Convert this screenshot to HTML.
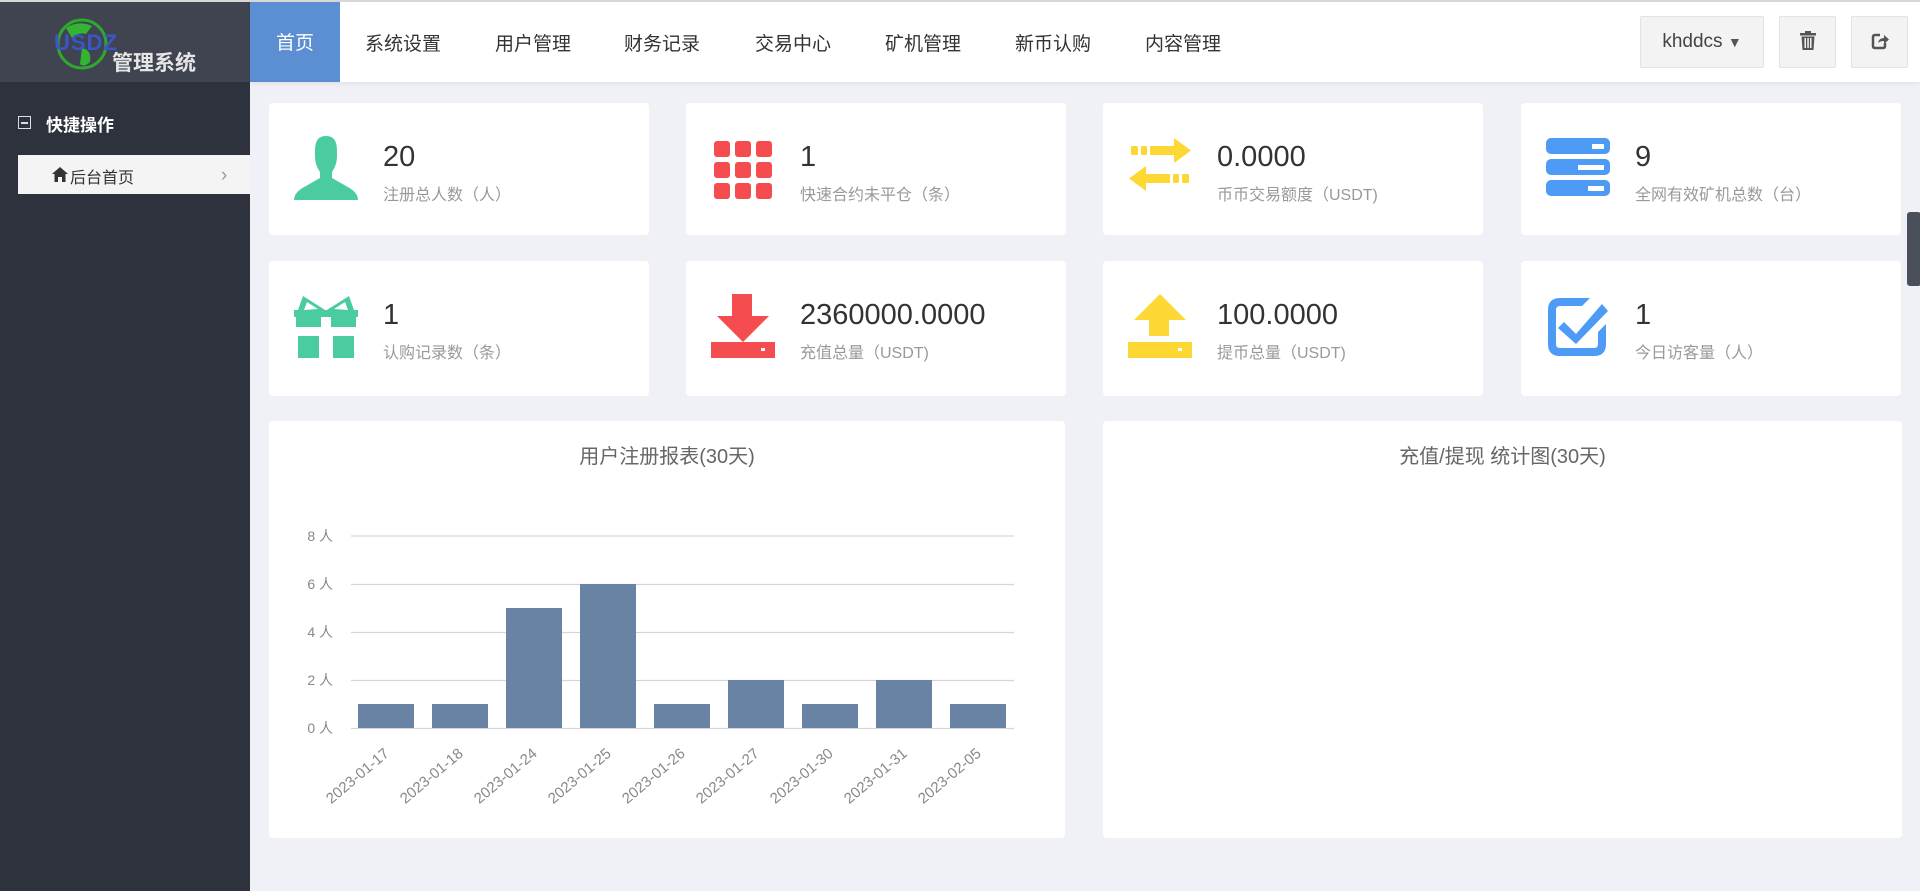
<!DOCTYPE html>
<html><head><meta charset="utf-8"><style>
*{margin:0;padding:0;box-sizing:border-box}
body{width:1920px;height:891px;overflow:hidden;background:#f0f1f6;font-family:"Liberation Sans","Noto Sans CJK SC",sans-serif;position:relative}
.topline{position:absolute;left:0;top:0;width:1920px;height:2px;background:#d8d8d8}
.logo{position:absolute;left:0;top:2px;width:250px;height:80px;background:#3f4450}
.side{position:absolute;left:0;top:82px;width:250px;height:809px;background:#2d323d}
.header{position:absolute;left:250px;top:2px;width:1670px;height:80px;background:#fff;box-shadow:0 2px 4px rgba(0,0,0,.06)}
.nav{position:absolute;top:3px;height:80px;line-height:80px;font-size:19px;color:#333}
.nav.act{background:#5b8fd1;color:#fff;width:90px;text-align:center;left:0;top:0;line-height:84px}
.btn{position:absolute;top:14px;height:52px;background:#f3f3f3;border:1px solid #e3e3e3;border-radius:2px;font-size:19px;color:#444;text-align:center;line-height:50px}
.card{position:absolute;background:#fff;border-radius:4px;width:380px}
.card .ic{position:absolute;left:25px;top:33px;width:64px;height:64px}
.card .num{position:absolute;left:114px;top:38px;font-size:29px;color:#333}
.card .lab{position:absolute;left:114px;top:78px;font-size:16px;color:#999}
.chart{position:absolute;background:#fff;border-radius:4px;top:421px;height:417px}
.chart .t{position:absolute;top:19px;width:100%;text-align:center;font-size:20px;color:#666}
</style></head><body>
<div class="topline"></div>
<div class="logo">
<svg style="position:absolute;left:52px;top:16px" width="62" height="56" viewBox="0 0 62 56"><circle cx="30" cy="26" r="24" fill="none" stroke="#2ea82e" stroke-width="3"/><path d="M14 10 Q26 2 40 8 L34 16 Q26 14 20 20 Z M30 30 Q40 32 38 44 Q32 50 28 46 Z" fill="#33b533"/></svg>
<div style="position:absolute;left:54px;top:28px;font-size:22px;font-weight:bold;color:#3a55c8;letter-spacing:1px">USDZ</div>
<div style="position:absolute;left:112px;top:45px;font-size:21px;color:#e6e6e6;font-weight:bold">管理系统</div>
</div>
<div class="side">
<div style="position:absolute;left:18px;top:34px;width:13px;height:13px;border:1.5px solid #ddd"><div style="margin:4.5px 2px;height:2px;background:#ddd"></div></div>
<div style="position:absolute;left:46px;top:29px;font-size:17px;font-weight:bold;color:#fff">快捷操作</div>
<div style="position:absolute;left:18px;top:73px;width:232px;height:39px;background:#f4f4f4">
<svg style="position:absolute;left:34px;top:12px" width="16" height="15" viewBox="0 0 16 15"><path d="M8 0 L16 7 H13.5 V15 H10 V10 H6 V15 H2.5 V7 H0 Z" fill="#333"/></svg>
<div style="position:absolute;left:52px;top:9px;font-size:16px;color:#333">后台首页</div>
<div style="position:absolute;left:203px;top:10px;font-size:19px;color:#999">›</div>
</div>
</div>
<div class="header">
<div class="nav act">首页</div>
<div class="nav" style="left:115px">系统设置</div>
<div class="nav" style="left:245px">用户管理</div>
<div class="nav" style="left:374px">财务记录</div>
<div class="nav" style="left:505px">交易中心</div>
<div class="nav" style="left:635px">矿机管理</div>
<div class="nav" style="left:765px">新币认购</div>
<div class="nav" style="left:895px">内容管理</div>
<div class="btn" style="left:1390px;width:124px">khddcs <span style="font-size:14px;color:#555">▼</span></div>
<div class="btn" style="left:1529px;width:57px"><svg width="16" height="19" viewBox="0 0 16 19" style="margin-top:14px"><rect x="0" y="2" width="16" height="2.5" fill="#555"/><rect x="5" y="0" width="6" height="2.5" fill="#555"/><path d="M1.5 5.5 H14.5 L13.5 19 H2.5 Z" fill="#555"/><rect x="4.5" y="7" width="1.5" height="10" fill="#f3f3f3"/><rect x="7.3" y="7" width="1.5" height="10" fill="#f3f3f3"/><rect x="10" y="7" width="1.5" height="10" fill="#f3f3f3"/></svg></div>
<div class="btn" style="left:1601px;width:57px"><svg width="18" height="18" viewBox="0 0 18 18" style="margin-top:15px"><path d="M9 3 H4 Q2 3 2 5 V14 Q2 16 4 16 H12 Q14 16 14 14 V11" fill="none" stroke="#555" stroke-width="2.5"/><path d="M7 11 Q8 6 13 6 V3 L18 7.5 L13 12 V9 Q9 9 7 11 Z" fill="#555"/></svg></div>
</div>

<!-- row 1 -->
<div class="card" style="left:269px;top:103px;height:132px">
<svg class="ic" viewBox="0 0 64 64"><path d="M32 0 C20 0 21 12 21 20 C21 28 24 33 26 36 V42 L12 50 Q0 56 0 64 H64 Q64 56 52 50 L38 42 V36 C40 33 43 28 43 20 C43 12 44 0 32 0 Z" fill="#4bcca0"/></svg>
<div class="num">20</div><div class="lab">注册总人数（人）</div></div>
<div class="card" style="left:686px;top:103px;height:132px">
<svg class="ic" viewBox="0 0 64 64"><g fill="#f54d4f"><rect x="3" y="5" width="16" height="16" rx="3"/><rect x="24" y="5" width="16" height="16" rx="3"/><rect x="45" y="5" width="16" height="16" rx="3"/><rect x="3" y="26" width="16" height="16" rx="3"/><rect x="24" y="26" width="16" height="16" rx="3"/><rect x="45" y="26" width="16" height="16" rx="3"/><rect x="3" y="47" width="16" height="16" rx="3"/><rect x="24" y="47" width="16" height="16" rx="3"/><rect x="45" y="47" width="16" height="16" rx="3"/></g></svg>
<div class="num">1</div><div class="lab">快速合约未平仓（条）</div></div>
<div class="card" style="left:1103px;top:103px;height:132px">
<svg class="ic" viewBox="0 0 64 64"><g fill="#fdd835"><rect x="3" y="10" width="7" height="9" rx="1.5"/><rect x="13" y="10" width="6" height="9" rx="1.5"/><path d="M22 10 H46 V2 L63 14.5 L46 27 V19 H22 Z"/><rect x="54" y="38" width="7" height="9" rx="1.5"/><rect x="45" y="38" width="6" height="9" rx="1.5"/><path d="M42 38 H18 V30 L1 42.5 L18 55 V47 H42 Z"/></g></svg>
<div class="num">0.0000</div><div class="lab">币币交易额度（USDT)</div></div>
<div class="card" style="left:1521px;top:103px;height:132px">
<svg class="ic" viewBox="0 0 64 64"><g fill="#4d9bf5"><rect x="0" y="2" width="64" height="16" rx="5"/><rect x="0" y="23" width="64" height="16" rx="5"/><rect x="0" y="44" width="64" height="16" rx="5"/></g><g fill="#fff"><rect x="46" y="8" width="12" height="5"/><rect x="32" y="29" width="26" height="5"/><rect x="42" y="50" width="16" height="5"/></g></svg>
<div class="num">9</div><div class="lab">全网有效矿机总数（台）</div></div>

<!-- row 2 -->
<div class="card" style="left:269px;top:261px;height:135px">
<svg class="ic" viewBox="0 0 64 64" style="top:33px"><g fill="#4bcca0"><rect x="0" y="16" width="64" height="7"/><rect x="2" y="23" width="25" height="10"/><rect x="37" y="23" width="25" height="10"/><rect x="4" y="42" width="21" height="22"/><rect x="39" y="42" width="21" height="22"/><path d="M4 16 L9 2 L28 14 L31 16 Z M60 16 L55 2 L36 14 L33 16 Z"/></g><path d="M10 16 L13 8 L24 15 Z M54 16 L51 8 L40 15 Z" fill="#fff"/></svg>
<div class="num">1</div><div class="lab">认购记录数（条）</div></div>
<div class="card" style="left:686px;top:261px;height:135px">
<svg class="ic" viewBox="0 0 64 64"><g fill="#f54d4f"><rect x="21" y="0" width="20" height="24"/><path d="M6 22 H58 L32 48 Z"/><rect x="0" y="48" width="64" height="16"/></g><rect x="50" y="54" width="4" height="3" fill="#fff"/></svg>
<div class="num">2360000.0000</div><div class="lab">充值总量（USDT)</div></div>
<div class="card" style="left:1103px;top:261px;height:135px">
<svg class="ic" viewBox="0 0 64 64"><g fill="#fdd835"><rect x="21" y="24" width="20" height="18"/><path d="M6 26 H58 L32 0 Z"/><rect x="0" y="48" width="64" height="16"/></g><rect x="50" y="54" width="4" height="3" fill="#fff"/></svg>
<div class="num">100.0000</div><div class="lab">提币总量（USDT)</div></div>
<div class="card" style="left:1521px;top:261px;height:135px">
<svg class="ic" viewBox="0 0 64 64"><path d="M44 4 H14 Q2 4 2 16 V50 Q2 62 14 62 H48 Q60 62 60 50 V30 L52 38 V50 Q52 54 48 54 H14 Q10 54 10 50 V16 Q10 12 14 12 H36 Z" fill="#4d9bf5"/><path d="M18 28 L30 40 L56 10 L62 17 L30 50 L12 34 Z" fill="#4d9bf5"/></svg>
<div class="num">1</div><div class="lab">今日访客量（人）</div></div>

<!-- charts -->
<div class="chart" style="left:269px;width:796px"><div class="t">用户注册报表(30天)</div></div>
<div class="chart" style="left:1103px;width:799px"><div class="t">充值/提现 统计图(30天)</div></div>

<svg style="position:absolute;left:0;top:0" width="1920" height="891">
<g stroke="#d6d6d6" stroke-width="1.3">
<line x1="351" y1="536" x2="1014" y2="536"/><line x1="351" y1="584.5" x2="1014" y2="584.5"/><line x1="351" y1="632.5" x2="1014" y2="632.5"/><line x1="351" y1="680.5" x2="1014" y2="680.5"/><line x1="351" y1="728.5" x2="1014" y2="728.5"/>
</g>
<g font-size="14" fill="#888" text-anchor="end" font-family="Liberation Sans,Noto Sans CJK SC,sans-serif">
<text x="333" y="541">8 人</text><text x="333" y="589">6 人</text><text x="333" y="637">4 人</text><text x="333" y="685">2 人</text><text x="333" y="733">0 人</text>
</g>
<g fill="#6983a4">
<rect x="358" y="704" width="56" height="24"/>
<rect x="432" y="704" width="56" height="24"/>
<rect x="506" y="608" width="56" height="120"/>
<rect x="580" y="584" width="56" height="144"/>
<rect x="654" y="704" width="56" height="24"/>
<rect x="728" y="680" width="56" height="48"/>
<rect x="802" y="704" width="56" height="24"/>
<rect x="876" y="680" width="56" height="48"/>
<rect x="950" y="704" width="56" height="24"/>
</g>
<g font-size="15" fill="#888" text-anchor="end" font-family="Liberation Sans,sans-serif">
<text transform="translate(390,755) rotate(-40)">2023-01-17</text>
<text transform="translate(464,755) rotate(-40)">2023-01-18</text>
<text transform="translate(538,755) rotate(-40)">2023-01-24</text>
<text transform="translate(612,755) rotate(-40)">2023-01-25</text>
<text transform="translate(686,755) rotate(-40)">2023-01-26</text>
<text transform="translate(760,755) rotate(-40)">2023-01-27</text>
<text transform="translate(834,755) rotate(-40)">2023-01-30</text>
<text transform="translate(908,755) rotate(-40)">2023-01-31</text>
<text transform="translate(982,755) rotate(-40)">2023-02-05</text>
</g>
<rect x="1907" y="212" width="14" height="74" rx="3" fill="#4a505a"/>
</svg>
</body></html>
